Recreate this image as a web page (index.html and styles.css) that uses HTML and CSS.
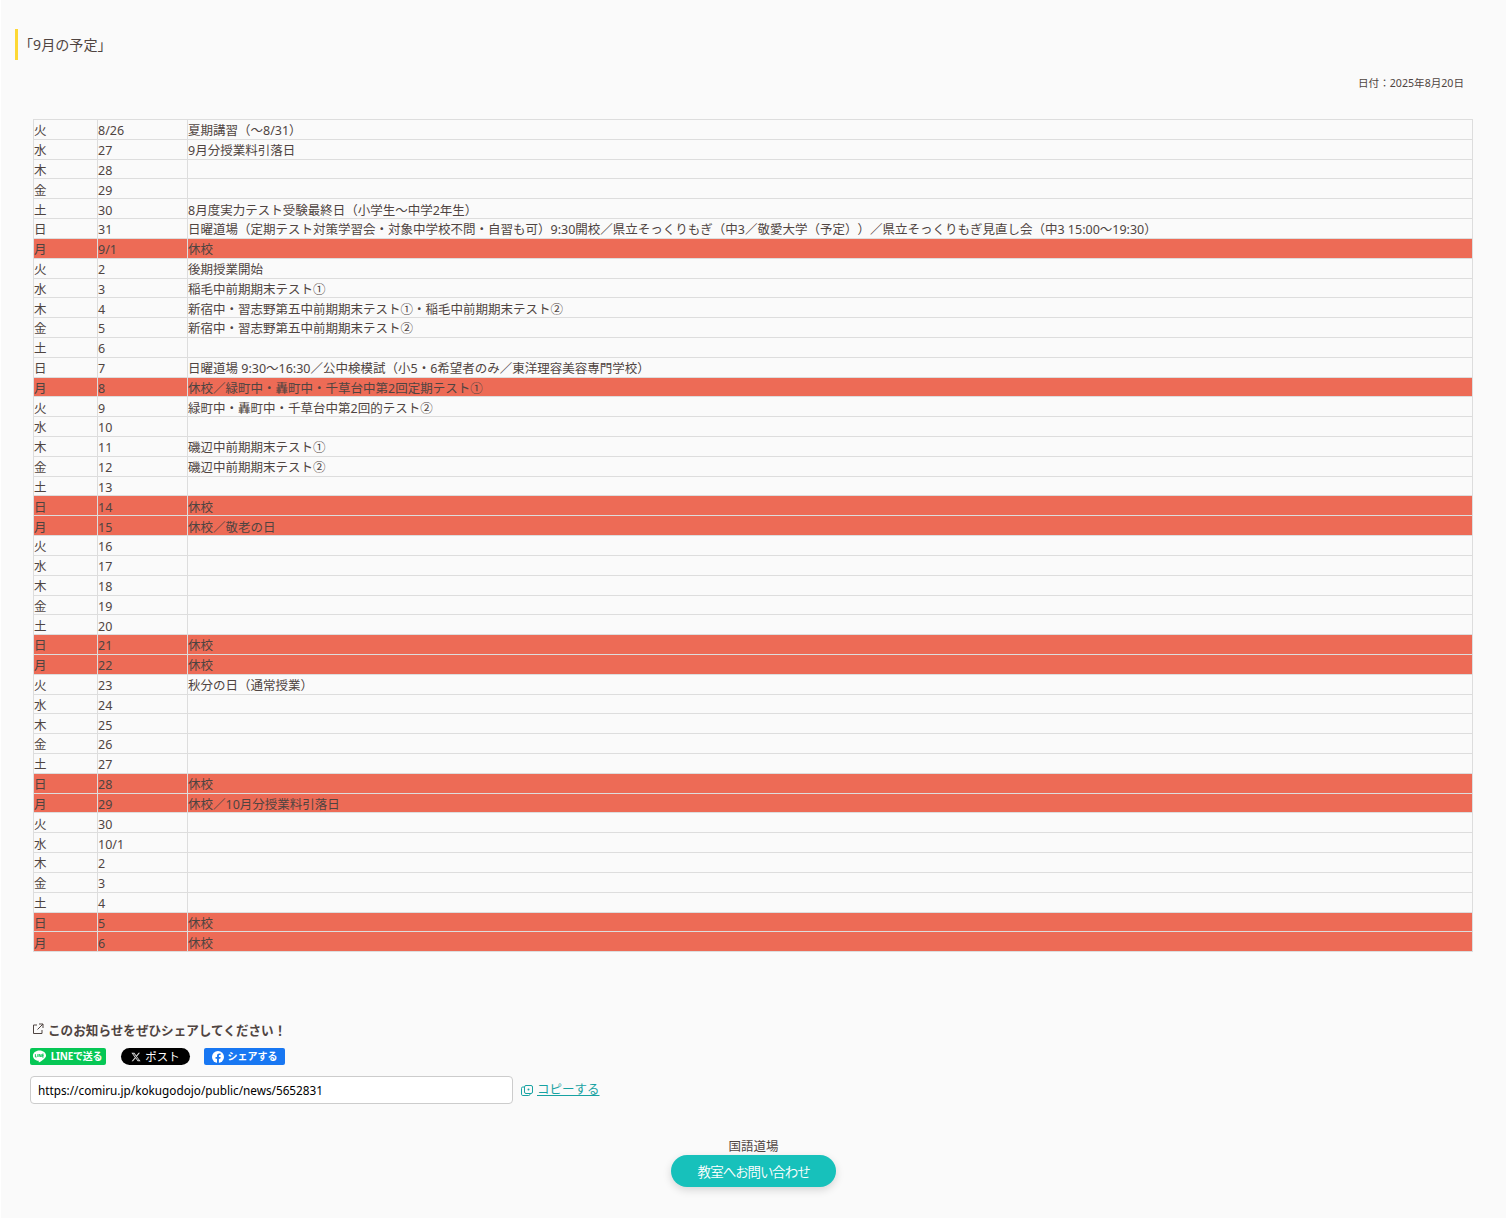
FILE: index.html
```html
<!DOCTYPE html>
<html lang="ja">
<head>
<meta charset="utf-8">
<title>9月の予定</title>
<link rel="stylesheet" href="styles.css">
</head>
<body>
<main class="page">
  <h1 class="title">「9月の予定」</h1>
  <p class="date">日付：2025年8月20日</p>
  <table class="schedule">
    <colgroup><col class="c1"><col class="c2"><col></colgroup>
    <tbody>
      <tr><td>火</td><td>8/26</td><td>夏期講習（〜8/31）</td></tr>
      <tr><td>水</td><td>27</td><td>9月分授業料引落日</td></tr>
      <tr><td>木</td><td>28</td><td></td></tr>
      <tr><td>金</td><td>29</td><td></td></tr>
      <tr><td>土</td><td>30</td><td>8月度実力テスト受験最終日（小学生〜中学2年生）</td></tr>
      <tr><td>日</td><td>31</td><td>日曜道場（定期テスト対策学習会・対象中学校不問・自習も可）9:30開校／県立そっくりもぎ（中3／敬愛大学（予定））／県立そっくりもぎ見直し会（中3 15:00〜19:30）</td></tr>
      <tr class="off"><td>月</td><td>9/1</td><td>休校</td></tr>
      <tr><td>火</td><td>2</td><td>後期授業開始</td></tr>
      <tr><td>水</td><td>3</td><td>稲毛中前期期末テスト①</td></tr>
      <tr><td>木</td><td>4</td><td>新宿中・習志野第五中前期期末テスト①・稲毛中前期期末テスト②</td></tr>
      <tr><td>金</td><td>5</td><td>新宿中・習志野第五中前期期末テスト②</td></tr>
      <tr><td>土</td><td>6</td><td></td></tr>
      <tr><td>日</td><td>7</td><td>日曜道場 9:30〜16:30／公中検模試（小5・6希望者のみ／東洋理容美容専門学校）</td></tr>
      <tr class="off"><td>月</td><td>8</td><td>休校／緑町中・轟町中・千草台中第2回定期テスト①</td></tr>
      <tr><td>火</td><td>9</td><td>緑町中・轟町中・千草台中第2回的テスト②</td></tr>
      <tr><td>水</td><td>10</td><td></td></tr>
      <tr><td>木</td><td>11</td><td>磯辺中前期期末テスト①</td></tr>
      <tr><td>金</td><td>12</td><td>磯辺中前期期末テスト②</td></tr>
      <tr><td>土</td><td>13</td><td></td></tr>
      <tr class="off"><td>日</td><td>14</td><td>休校</td></tr>
      <tr class="off"><td>月</td><td>15</td><td>休校／敬老の日</td></tr>
      <tr><td>火</td><td>16</td><td></td></tr>
      <tr><td>水</td><td>17</td><td></td></tr>
      <tr><td>木</td><td>18</td><td></td></tr>
      <tr><td>金</td><td>19</td><td></td></tr>
      <tr><td>土</td><td>20</td><td></td></tr>
      <tr class="off"><td>日</td><td>21</td><td>休校</td></tr>
      <tr class="off"><td>月</td><td>22</td><td>休校</td></tr>
      <tr><td>火</td><td>23</td><td>秋分の日（通常授業）</td></tr>
      <tr><td>水</td><td>24</td><td></td></tr>
      <tr><td>木</td><td>25</td><td></td></tr>
      <tr><td>金</td><td>26</td><td></td></tr>
      <tr><td>土</td><td>27</td><td></td></tr>
      <tr class="off"><td>日</td><td>28</td><td>休校</td></tr>
      <tr class="off"><td>月</td><td>29</td><td>休校／10月分授業料引落日</td></tr>
      <tr><td>火</td><td>30</td><td></td></tr>
      <tr><td>水</td><td>10/1</td><td></td></tr>
      <tr><td>木</td><td>2</td><td></td></tr>
      <tr><td>金</td><td>3</td><td></td></tr>
      <tr><td>土</td><td>4</td><td></td></tr>
      <tr class="off"><td>日</td><td>5</td><td>休校</td></tr>
      <tr class="off"><td>月</td><td>6</td><td>休校</td></tr>
    </tbody>
  </table>
  <section class="share">
    <p class="share-head">
      <svg class="ext" viewBox="0 0 12 12" width="12" height="12" fill="none" stroke="currentColor" stroke-width="1"><path d="M5 2H1.500v8.500H10V7"/><path d="M7 1h4v4M11 1 5.500 6.500"/></svg>
      <span>このお知らせをぜひシェアしてください！</span>
    </p>
    <div class="buttons">
      <a class="sns line"><svg viewBox="0 0 16 16" width="15" height="15"><path fill="#fff" d="M8 1.500c-3.900 0-7 2.500-7 5.600 0 2.800 2.500 5.100 5.800 5.500.5.100.4.500.3 1.300 0 .3.200.5.700.2 1.800-1 5-3.100 6.200-4.800.6-.7 1-1.400 1-2.200 0-3.100-3.100-5.600-7-5.600z"/><path fill="none" stroke="#06c755" stroke-width="1" d="M3.600 5.500v3h1.300M6.200 5.500v3M7.600 8.500v-3l2 3v-3M12.500 5.500h-1.700v3h1.700M10.800 7h1.700"/></svg><span>LINEで送る</span></a>
      <a class="sns x"><svg viewBox="0 0 24 24" width="10" height="10"><path fill="#ddd" d="M18.200 2h3.400l-7.400 8.500L23 22h-6.800l-5.300-7-6.100 7H1.400l7.900-9.100L1 2h7l4.800 6.400L18.200 2zm-1.200 18h1.900L7 3.900H5L17 20z"/></svg><span>ポスト</span></a>
      <a class="sns fb"><svg viewBox="0 0 16 16" width="12" height="12"><circle cx="8" cy="8" r="8" fill="#fff"/><path fill="#1877f2" d="M9.200 16V10.300h1.900l.4-2.300H9.200V6.600c0-.7.300-1.200 1.300-1.200h1V3.400c-.5-.1-1.100-.2-1.700-.2-1.900 0-3.100 1.100-3.100 3.200V8H4.700v2.300h2V16z"/></svg><span>シェアする</span></a>
    </div>
    <div class="url-row">
      <input class="url" type="text" value="https://comiru.jp/kokugodojo/public/news/5652831" readonly>
      <svg class="copy" viewBox="0 0 12 12" width="12" height="12" fill="none" stroke="currentColor" stroke-width="1"><rect x="3.500" y="1.500" width="8" height="8" rx="1.500"/><path d="M3 3H1.800A1.300 1.300 0 0 0 .5 4.300v6A1.300 1.300 0 0 0 1.800 11.500h6A1.300 1.300 0 0 0 9 10.300V10"/><circle cx="7.500" cy="5.500" r="1" fill="currentColor" stroke="none"/></svg>
      <a class="copy-link">コピーする</a>
    </div>
  </section>
  <section class="contact">
    <p class="school">国語道場</p>
    <a class="contact-btn">教室へお問い合わせ</a>
  </section>
</main>
</body>
</html>
```
FILE: styles.css
```css
* { box-sizing: border-box; }
html, body { margin: 0; background: #fff; }
body {
  font-family: "Noto Sans", "Noto Sans CJK JP", sans-serif;
  color: #4f4441;
  font-size: 12.500px;
  text-spacing-trim: space-all;
}
.page {
  width: 1505px;
  height: 1218px;
  margin-left: 1px;
  background: #fafafa;
  padding: 29px 32px 0 14px;
}
.title {
  margin: 0;
  height: 31px;
  border-left: 3px solid #fdd835;
  padding-left: 1px;
  font-size: 14.100px;
  font-weight: 400;
  line-height: 31px;
}
.date {
  margin: 15px 10px 0 0;
  text-align: right;
  font-size: 10.600px;
  line-height: 16px;
}
.schedule {
  border-collapse: collapse;
  table-layout: fixed;
  width: 1440px;
  margin: 28px 0 0 18px;
  line-height: 15.510px;
}
.c1 { width: 64px; }
.c2 { width: 90px; }
.schedule td {
  border: 1px solid #ddd;
  padding: 3.300px 0 0;
  height: 19.810px;
  vertical-align: top;
}
.schedule .off td { background: #ed6b56; }
.share { margin: 67px 0 0 15px; }
.share-head {
  margin: 0;
  display: flex;
  align-items: center;
  gap: 4px;
  padding-left: 2px;
  height: 20px;
  font-size: 12.600px;
  font-weight: 700;
}
.buttons {
  display: flex;
  gap: 15px;
  margin-top: 9px;
  height: 17px;
}
.sns {
  display: flex;
  align-items: center;
  justify-content: center;
  gap: 3px;
  height: 17px;
  color: #fff;
  font-size: 10px;
  font-weight: 700;
  border-radius: 2px;
  white-space: nowrap;
}
.sns span { margin-top: -2px; }
.line { width: 76px; background: #06c755; gap: 4px; padding-right: 2px; letter-spacing: -.25px; }
.x { width: 69px; background: #000; border-radius: 9px; gap: 4px; font-weight: 400; font-size: 11.500px; }
.fb { width: 81px; margin-left: -1px; background: #1877f2; gap: 4px; }
.url-row {
  display: flex;
  align-items: center;
  margin-top: 11px;
  height: 28px;
  color: #17a2a2;
}
.url {
  width: 483px;
  height: 28px;
  border: 1px solid #ccc;
  border-radius: 4px;
  background: #fff;
  padding: 0 7px;
  font: 11.750px "Noto Sans", "Noto Sans CJK JP", sans-serif;
  color: #000;
}
.copy { margin-left: 8px; }
.copy-link {
  margin-left: 4px;
  margin-top: -1px;
  color: #17a2a2;
  line-height: 15px;
  text-decoration: underline;
}
.contact {
  display: flex;
  flex-direction: column;
  align-items: center;
  width: 1505px;
  margin: 35px 0 0 -14px;
}
.school { margin: 0; line-height: 16px; color: #4f4441; }
.contact-btn {
  width: 165px;
  height: 32px;
  border-radius: 16px;
  background: #17c1bb;
  color: #fff;
  font-size: 13.500px;
  font-weight: 350;
  font-feature-settings: "palt";
  letter-spacing: -.9px;
  line-height: 34px;
  text-align: center;
  box-shadow: 0 3px 8px rgba(0,0,0,.15);
}
```
